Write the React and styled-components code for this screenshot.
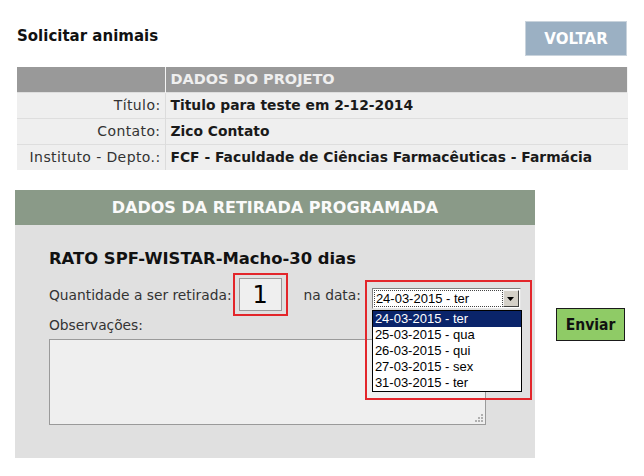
import React from "react";
import styled, { createGlobalStyle } from "styled-components";

const Global = createGlobalStyle`
  html, body { margin: 0; padding: 0; background: #fff; }
  body { font-family: "DejaVu Sans", Verdana, sans-serif; color: #222; }
  * { box-sizing: border-box; }
`;

const Page = styled.div`
  width: 644px;
  height: 476px;
  padding: 21px 16px 0 15px;
  overflow: hidden;
`;

const TopBar = styled.div`
  display: flex;
  justify-content: space-between;
  align-items: center;
  height: 35px;
  padding-left: 2px;
  margin-right: 1px;
`;

const Heading = styled.h1`
  margin: 0;
  font-family: "DejaVu Sans", sans-serif;
  font-size: 15px;
  font-weight: bold;
  color: #111;
  position: relative;
  top: -3px;
`;

const BackButton = styled.button`
  width: 102px;
  height: 35px;
  background: #9bb0c3;
  border: 1px solid #c9d3dc;
  color: #fff;
  font-family: "DejaVu Sans", sans-serif;
  font-weight: bold;
  font-size: 15px;
  padding: 0;
`;

const Table = styled.table`
  margin: 11px 0 0 2px;
  width: 611px;
  border-collapse: collapse;
  font-size: 14px;
`;

const HeadCell = styled.th`
  background: #999;
  color: #efefef;
  height: 25px;
  text-align: left;
  padding: 0 0 0 5px;
  font-weight: bold;
  font-size: 14.5px;
  border-right: 1px solid #f4f4f4;
  &:first-child { width: 148px; }
`;

const LabelCell = styled.td`
  background: #efefef;
  height: 26px;
  text-align: right;
  padding: 0 4px 0 0;
  color: #333;
  letter-spacing: 0.4px;
  border-top: 1px solid #dedede;
  border-right: 1px solid #dcdcdc;
`;

const ValueCell = styled.td`
  background: #efefef;
  padding: 0 0 0 5px;
  font-weight: bold;
  font-size: 13.85px;
  color: #1a1a1a;
  border-top: 1px solid #dedede;
`;

const Lower = styled.div`
  display: flex;
  align-items: flex-start;
  margin-top: 20px;
`;

const Panel = styled.section`
  width: 520px;
  height: 268px;
  flex-shrink: 0;
  background: #e0e0e0;
`;

const PanelHeader = styled.div`
  height: 35px;
  background: #8a9a88;
  color: #fafafa;
  font-weight: bold;
  font-size: 16px;
  display: flex;
  align-items: center;
  justify-content: center;
`;

const PanelBody = styled.div`
  padding: 24px 0 0 34px;
`;

const ItemTitle = styled.h2`
  margin: 0 0 4px;
  font-size: 16.4px;
  line-height: 19px;
  font-weight: bold;
  color: #111;
`;

const QtyRow = styled.div`
  display: flex;
  align-items: center;
  font-size: 13.8px;
  color: #333;
  height: 45px;
  white-space: nowrap;
`;

const Highlight = styled.div`
  border: 2px solid #e3262b;
  position: relative;
  z-index: 1;
  flex-shrink: 0;
`;

const QtyFrame = styled(Highlight)`
  padding: 3px 4px;
  margin-left: 1px;
`;

const QtyBox = styled.div`
  width: 43px;
  height: 33px;
  background: #efefef;
  border: 1px solid #9a9a9a;
  display: flex;
  align-items: center;
  justify-content: center;
  font-size: 24px;
  color: #000;
`;

const DateLabel = styled.span`
  margin-left: 16px;
`;

const SelectFrame = styled(Highlight)`
  width: 167px;
  height: 120px;
  margin-left: 4px;
  align-self: flex-start;
  margin-top: 8px;
  padding: 6px 0 0 5px;
`;

const Select = styled.div`
  width: 149px;
  height: 21px;
  background: #fff;
  border: 1px solid;
  border-color: #808080 #e6e6e6 #e6e6e6 #808080;
  display: flex;
  padding: 1px;
  font-family: "Liberation Sans", Arial, sans-serif;
  font-size: 13px;
  color: #000;
`;

const SelectValue = styled.div`
  flex: 1;
  border: 1px dotted #444;
  display: flex;
  align-items: center;
  padding-left: 1px;
`;

const ArrowButton = styled.div`
  width: 16px;
  background: #d4d0c8;
  border: 1px solid;
  border-color: #f4f4f4 #404040 #404040 #f4f4f4;
  display: flex;
  align-items: center;
  justify-content: center;
`;

const OptionList = styled.ul`
  position: absolute;
  left: 5px;
  top: 28px;
  width: 150px;
  margin: 0;
  padding: 0;
  list-style: none;
  background: #fff;
  border: 1px solid #000;
  font-family: "Liberation Sans", Arial, sans-serif;
  font-size: 13px;
`;

const Option = styled.li`
  height: 16px;
  line-height: 16px;
  padding-left: 2px;
  background: ${(p) => (p.$selected ? "#0a246a" : "#fff")};
  color: ${(p) => (p.$selected ? "#fff" : "#000")};
`;

const ObsLabel = styled.div`
  font-size: 13.8px;
  line-height: 17px;
  color: #333;
`;

const TextArea = styled.div`
  width: 437px;
  height: 86px;
  margin-top: 5px;
  background: #efefef;
  border: 1px solid #9a9a9a;
  position: relative;
`;

const Grip = styled.svg`
  position: absolute;
  right: 1px;
  bottom: 1px;
`;

const SendButton = styled.button`
  margin: 118px 0 0 21px;
  width: 69px;
  height: 33px;
  flex-shrink: 0;
  background: #8fcb66;
  border: 1px solid #1a1a1a;
  font-family: "DejaVu Sans Condensed", "DejaVu Sans", sans-serif;
  font-weight: bold;
  font-size: 15.5px;
  color: #111;
  padding: 0;
`;

const rows = [
  ["Título:", "Titulo para teste em 2-12-2014"],
  ["Contato:", "Zico Contato"],
  ["Instituto - Depto.:", "FCF - Faculdade de Ciências Farmacêuticas - Farmácia"],
];

const dates = [
  "24-03-2015 - ter",
  "25-03-2015 - qua",
  "26-03-2015 - qui",
  "27-03-2015 - sex",
  "31-03-2015 - ter",
];

export default function App() {
  return (
    <>
      <Global />
      <Page>
        <TopBar>
          <Heading>Solicitar animais</Heading>
          <BackButton>VOLTAR</BackButton>
        </TopBar>
        <Table>
          <thead>
            <tr>
              <HeadCell />
              <HeadCell>DADOS DO PROJETO</HeadCell>
            </tr>
          </thead>
          <tbody>
            {rows.map(([k, v]) => (
              <tr key={k}>
                <LabelCell>{k}</LabelCell>
                <ValueCell>{v}</ValueCell>
              </tr>
            ))}
          </tbody>
        </Table>
        <Lower>
          <Panel>
            <PanelHeader>DADOS DA RETIRADA PROGRAMADA</PanelHeader>
            <PanelBody>
              <ItemTitle>RATO SPF-WISTAR-Macho-30 dias</ItemTitle>
              <QtyRow>
                <span>Quantidade a ser retirada:</span>
                <QtyFrame>
                  <QtyBox>1</QtyBox>
                </QtyFrame>
                <DateLabel>na data:</DateLabel>
                <SelectFrame>
                  <Select>
                    <SelectValue>24-03-2015 - ter</SelectValue>
                    <ArrowButton>
                      <svg width="7" height="4" viewBox="0 0 7 4">
                        <path d="M0 0h7L3.5 4z" fill="#000" />
                      </svg>
                    </ArrowButton>
                  </Select>
                  <OptionList>
                    {dates.map((d, i) => (
                      <Option key={d} $selected={i === 0}>
                        {d}
                      </Option>
                    ))}
                  </OptionList>
                </SelectFrame>
              </QtyRow>
              <ObsLabel>Observações:</ObsLabel>
              <TextArea>
                <Grip width="10" height="10" viewBox="0 0 10 10">
                  <g fill="#b0b0b0">
                    <rect x="7" y="1" width="2" height="2" />
                    <rect x="4" y="4" width="2" height="2" />
                    <rect x="7" y="4" width="2" height="2" />
                    <rect x="1" y="7" width="2" height="2" />
                    <rect x="4" y="7" width="2" height="2" />
                    <rect x="7" y="7" width="2" height="2" />
                  </g>
                </Grip>
              </TextArea>
            </PanelBody>
          </Panel>
          <SendButton>Enviar</SendButton>
        </Lower>
      </Page>
    </>
  );
}
